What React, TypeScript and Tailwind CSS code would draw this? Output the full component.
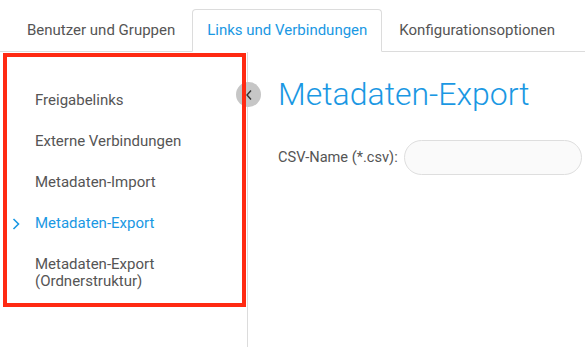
import React from 'react'

const tabs = [
  { label: 'Benutzer und Gruppen', active: false },
  { label: 'Links und Verbindungen', active: true },
  { label: 'Konfigurationsoptionen', active: false },
]

const menu = [
  { label: 'Freigabelinks' },
  { label: 'Externe Verbindungen' },
  { label: 'Metadaten-Import' },
  { label: 'Metadaten-Export', active: true },
  { label: 'Metadaten-Export (Ordnerstruktur)' },
]

export default function App() {
  return (
    <div className="relative w-[585px] h-[347px] overflow-hidden bg-white font-['Roboto','Liberation_Sans',sans-serif] text-[#555]">
      {/* Tab bar */}
      <div className="flex items-end h-[52px] pl-[12px] gap-[2px] border-b border-[#dcdcdc]">
        {tabs.map((t) => (
          <div
            key={t.label}
            className={`-mb-px h-[43px] px-[14px] flex items-center text-[15px] rounded-t-[4px] border ${
              t.active
                ? 'bg-white border-[#dcdcdc] border-b-white text-[#1a98e3]'
                : 'border-transparent text-[#555]'
            }`}
          >
            {t.label}
          </div>
        ))}
      </div>

      <div className="flex h-[295px]">
        {/* Sidebar */}
        <div className="w-[248px] shrink-0 border-r border-[#dcdcdc] pt-[28px]">
          {menu.map((m) => (
            <div
              key={m.label}
              className={`relative pl-[35px] pr-[40px] py-[12px] text-[15px] leading-[17px] ${
                m.active ? 'text-[#1a98e3]' : 'text-[#555]'
              }`}
            >
              {m.active && (
                <svg
                  className="absolute left-[12px] top-[15px]"
                  width="8"
                  height="12"
                  viewBox="0 0 8 12"
                  fill="none"
                >
                  <path d="M1.5 1 L6.5 6 L1.5 11" stroke="#1a98e3" strokeWidth="1.6" />
                </svg>
              )}
              {m.label === 'Metadaten-Export (Ordnerstruktur)' ? (
                <>
                  Metadaten-Export
                  <br />
                  (Ordnerstruktur)
                </>
              ) : (
                m.label
              )}
            </div>
          ))}
        </div>

        {/* Content */}
        <div className="flex-1 pl-[30px] pt-[26px]">
          <h1 className="text-[32px] leading-[32px] font-light text-[#1a98e3]">Metadaten-Export</h1>
          <div className="mt-[30px] flex items-center gap-[6px]">
            <span className="text-[14.6px] text-[#555]">CSV-Name (*.csv):</span>
            <input
              className="w-[178px] h-[35px] rounded-full border border-[#dedede] bg-[#fafafa] outline-none px-3 text-[14px]"
            />
          </div>
        </div>
      </div>

      {/* Collapse button */}
      <div className="absolute left-[236px] top-[82px] w-[25px] h-[25px] rounded-full bg-[#c6c6c6] flex items-center justify-center">
        <svg width="8" height="12" viewBox="0 0 8 12" fill="none">
          <path d="M6 1.5 L2 6 L6 10.5" stroke="#333" strokeWidth="1.4" />
        </svg>
      </div>

      {/* Red annotation box */}
      <div className="absolute left-[3px] top-[53px] w-[243px] h-[254px] border-[4px] border-[#ff2a12] pointer-events-none" />
    </div>
  )
}
